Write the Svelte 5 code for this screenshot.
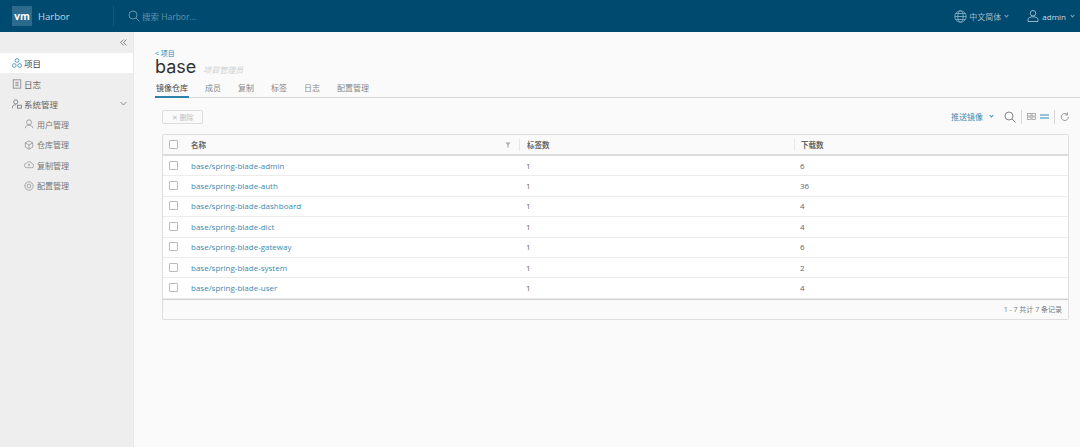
<script lang="ts">
    const tabs = ['镜像仓库', '成员', '复制', '标签', '日志', '配置管理'];

    const repos = [
        { name: 'base/spring-blade-admin', tags: 1, pulls: 6 },
        { name: 'base/spring-blade-auth', tags: 1, pulls: 36 },
        { name: 'base/spring-blade-dashboard', tags: 1, pulls: 4 },
        { name: 'base/spring-blade-dict', tags: 1, pulls: 4 },
        { name: 'base/spring-blade-gateway', tags: 1, pulls: 6 },
        { name: 'base/spring-blade-system', tags: 1, pulls: 2 },
        { name: 'base/spring-blade-user', tags: 1, pulls: 4 }
    ];
</script>

<div class="page">
    <header class="topbar">
        <div class="brand">
            <span class="logo">vm</span>
            <span class="brand-name">Harbor</span>
        </div>
        <div class="search">
            <!-- prettier-ignore -->
            <svg width="12" height="12" viewBox="0 0 24 24" fill="none" stroke="#5f93ae" stroke-width="2"><circle cx="10" cy="10" r="8"></circle><line x1="16" y1="16" x2="23" y2="23"></line></svg>
            <span>搜索 Harbor...</span>
        </div>
        <div class="top-right">
            <div class="top-item">
                <!-- prettier-ignore -->
                <svg width="13" height="13" viewBox="0 0 24 24" fill="none" stroke="#8fb3c7" stroke-width="1.5"><circle cx="12" cy="12" r="10.5"></circle><ellipse cx="12" cy="12" rx="5" ry="10.5"></ellipse><line x1="1.5" y1="12" x2="22.5" y2="12"></line><line x1="3" y1="6.5" x2="21" y2="6.5"></line><line x1="3" y1="17.5" x2="21" y2="17.5"></line></svg>
                <span>中文简体</span>
                <i class="caret"></i>
            </div>
            <div class="top-item user">
                <!-- prettier-ignore -->
                <svg width="12" height="14" viewBox="0 0 24 26" fill="none" stroke="#b5cedb" stroke-width="1.6"><circle cx="12" cy="7.5" r="5.5"></circle><path d="M2 24v-4c0-3 4-5.500 10-5.500s10 2.500 10 5.500v4z"></path></svg>
                <span>admin</span>
                <i class="caret"></i>
            </div>
        </div>
    </header>

    <div class="body">
        <nav class="sidebar">
            <div class="collapse">
                <!-- prettier-ignore -->
                <svg width="7" height="7" viewBox="0 0 12 12" fill="none" stroke="#666" stroke-width="1.4"><polyline points="6,1 1,6 6,11"></polyline><polyline points="11,1 6,6 11,11"></polyline></svg>
            </div>
            <a class="nav-item active">
                <!-- prettier-ignore -->
                <svg width="10" height="10" viewBox="0 0 24 24" fill="none" stroke="#3f8fb5" stroke-width="2"><circle cx="12" cy="6" r="4.500"></circle><circle cx="5.500" cy="18" r="4.500"></circle><circle cx="18.500" cy="18" r="4.500"></circle></svg>
                项目
            </a>
            <a class="nav-item">
                <!-- prettier-ignore -->
                <svg width="10" height="10" viewBox="0 0 24 24" fill="none" stroke="#888" stroke-width="2"><rect x="3" y="2" width="18" height="20"></rect><line x1="8" y1="8" x2="16" y2="8"></line><line x1="8" y1="12" x2="16" y2="12"></line><line x1="8" y1="16" x2="16" y2="16"></line></svg>
                日志
            </a>
            <a class="nav-item">
                <!-- prettier-ignore -->
                <svg width="10" height="10" viewBox="0 0 24 24" fill="none" stroke="#777" stroke-width="2"><circle cx="9" cy="7" r="5"></circle><path d="M1 22v-3c0-3 3-5 8-5"></path><rect x="13" y="15" width="10" height="7"></rect></svg>
                系统管理
                <!-- prettier-ignore -->
                <svg class="chevron" width="7" height="7" viewBox="0 0 12 12" fill="none" stroke="#777" stroke-width="1.400"><polyline points="1,3.500 6,8.500 11,3.500"></polyline></svg>
            </a>
            <a class="nav-item sub">
                <!-- prettier-ignore -->
                <svg width="10" height="10" viewBox="0 0 24 24" fill="none" stroke="#999" stroke-width="2"><circle cx="12" cy="8" r="6"></circle><path d="M3 22c1-5 4-7 9-7s8 2 9 7"></path></svg>
                用户管理
            </a>
            <a class="nav-item sub">
                <!-- prettier-ignore -->
                <svg width="10" height="10" viewBox="0 0 24 24" fill="none" stroke="#999" stroke-width="2"><path d="M12 2l9 5v10l-9 5-9-5V7z"></path><path d="M3 7l9 5 9-5M12 12v10"></path></svg>
                仓库管理
            </a>
            <a class="nav-item sub">
                <!-- prettier-ignore -->
                <svg width="10" height="10" viewBox="0 0 26 24" fill="none" stroke="#999" stroke-width="2"><path d="M7 19h13a5 5 0 0 0 1-10 8 8 0 0 0-15-1 5.500 5.500 0 0 0 1 11z"></path><path d="M13 16v-6M10 12l3-3 3 3"></path></svg>
                复制管理
            </a>
            <a class="nav-item sub">
                <!-- prettier-ignore -->
                <svg width="10" height="10" viewBox="0 0 24 24" fill="none" stroke="#999" stroke-width="2"><circle cx="12" cy="12" r="10"></circle><circle cx="12" cy="12" r="4.500"></circle></svg>
                配置管理
            </a>
        </nav>

        <main class="content">
            <a class="back">&lt; 项目</a>
            <div class="title-row">
                <h1>base</h1>
                <span class="role">项目管理员</span>
            </div>
            <div class="tabs">
                {#each tabs as tab, i}
                    <span class="tab" class:current={i === 0}>{tab}</span>
                {/each}
            </div>

            <div class="inner">
                <div class="toolbar">
                    <button class="delete"><span class="x">✕</span> 删除</button>
                    <div class="actions">
                        <span class="push">推送镜像</span>
                        <i class="caret blue"></i>
                        <!-- prettier-ignore -->
                        <svg class="mag" width="12" height="12" viewBox="0 0 24 24" fill="none" stroke="#777" stroke-width="1.800"><circle cx="10" cy="10" r="8"></circle><line x1="16" y1="16" x2="23" y2="23"></line></svg>
                        <span class="sep"></span>
                        <!-- prettier-ignore -->
                        <svg width="9" height="7" viewBox="0 0 18 14" fill="none" stroke="#999" stroke-width="1.500"><rect x="1" y="1" width="7" height="5"></rect><rect x="10" y="1" width="7" height="5"></rect><rect x="1" y="8" width="7" height="5"></rect><rect x="10" y="8" width="7" height="5"></rect></svg>
                        <!-- prettier-ignore -->
                        <svg width="9" height="7" viewBox="0 0 18 14" fill="none" stroke="#5a9dbf" stroke-width="2.500"><line x1="0" y1="4" x2="18" y2="4"></line><line x1="0" y1="10" x2="18" y2="10"></line></svg>
                        <span class="sep"></span>
                        <!-- prettier-ignore -->
                        <svg width="10" height="10" viewBox="0 0 24 24" fill="none" stroke="#888" stroke-width="2"><path d="M20 12a8.500 8.500 0 1 1-3-6.500"></path><polyline points="18,1 18,7 12,7"></polyline></svg>
                    </div>
                </div>

                <div class="grid">
                    <div class="row head">
                        <span class="cell check"><i class="box"></i></span>
                        <span class="cell name">
                            名称
                            <!-- prettier-ignore -->
                            <svg width="6" height="6" viewBox="0 0 10 10"><polygon points="1,1 9,1 6,5 6,9 4,9 4,5" fill="#aaa"></polygon></svg>
                        </span>
                        <span class="cell">标签数</span>
                        <span class="cell">下载数</span>
                    </div>
                    {#each repos as repo}
                        <div class="row item">
                            <span class="cell check"><i class="box"></i></span>
                            <a class="cell name link">{repo.name}</a>
                            <span class="cell">{repo.tags}</span>
                            <span class="cell">{repo.pulls}</span>
                        </div>
                    {/each}
                    <div class="foot">1 - 7 共计 7 条记录</div>
                </div>
            </div>
        </main>
    </div>
</div>

<style>
    :global(body) {
        background: #fafafa;
    }

    .page {
        display: flex;
        flex-direction: column;
        width: 1080px;
        height: 447px;
        overflow: hidden;
        font-family: 'Open Sans', 'Noto Sans CJK SC', sans-serif;
        font-size: 8px;
        color: #666;
    }

    .topbar {
        display: flex;
        align-items: center;
        flex: 0 0 32px;
        background: #004a70;
        color: #fff;
    }

    .brand {
        display: flex;
        align-items: center;
        gap: 6px;
        width: 114px;
        height: 20px;
        padding-left: 12px;
        border-right: 1px solid #0e5a80;
        box-sizing: border-box;
    }

    .logo {
        display: flex;
        align-items: center;
        justify-content: center;
        width: 20px;
        height: 20px;
        background: #2c6b8d;
        font-size: 10px;
        font-weight: 700;
    }

    .brand-name {
        font-size: 9.5px;
        color: #c5d9e4;
    }

    .search {
        display: flex;
        align-items: center;
        gap: 2px;
        margin-left: 14px;
        font-size: 8.500px;
        color: #5f93ae;
    }

    .top-right {
        display: flex;
        align-items: center;
        margin-left: auto;
        color: #9fbdcd;
    }

    .top-item {
        display: flex;
        align-items: center;
        gap: 2px;
    }

    .top-item.user {
        margin-left: 19px;
        margin-right: 6px;
        gap: 3px;
        color: #c5d9e4;
    }

    .caret {
        display: inline-block;
        width: 2px;
        height: 2px;
        margin: 0 0 2px 2px;
        border-right: 1px solid #86aabd;
        border-bottom: 1px solid #86aabd;
        transform: rotate(45deg);
    }

    .caret.blue {
        margin: 0 0 2px 3px;
        border-color: #3f8fb5;
    }

    .body {
        display: flex;
        flex: 1;
        min-height: 0;
    }

    .sidebar {
        display: flex;
        flex-direction: column;
        flex: 0 0 134px;
        background: #eeeeee;
        border-right: 1px solid #e8e8e8;
        box-sizing: border-box;
    }

    .collapse {
        display: flex;
        justify-content: flex-end;
        align-items: center;
        height: 21px;
        padding-right: 6px;
    }

    .nav-item {
        display: flex;
        align-items: center;
        gap: 2px;
        height: 20.400px;
        padding-left: 12px;
        font-size: 8.500px;
        color: #666;
    }

    .nav-item.active {
        background: #fff;
        color: #444;
    }

    .nav-item.sub {
        padding-left: 24px;
        gap: 3px;
        font-size: 8px;
        color: #777;
    }

    .chevron {
        margin-left: auto;
        margin-right: 6px;
    }

    .content {
        flex: 1;
        padding: 17px 0 0 21px;
        min-width: 0;
    }

    .back {
        display: block;
        height: 8px;
        font-size: 7px;
        line-height: 10px;
        color: #2a87b3;
    }

    .title-row {
        display: flex;
        align-items: baseline;
        gap: 7px;
        height: 20px;
    }

    h1 {
        margin: 0;
        font-family: 'Inter', sans-serif;
        font-size: 18px;
        font-weight: 400;
        line-height: 20px;
        color: #333;
    }

    .role {
        font-size: 8px;
        font-style: italic;
        color: #d0d0d0;
    }

    .tabs {
        display: flex;
        gap: 15px;
        height: 21px;
        border-bottom: 1px solid #d8d8d8;
        box-sizing: border-box;
    }

    .tab {
        padding: 5px 1px 0;
        height: 21px;
        box-sizing: border-box;
        font-size: 8px;
        line-height: 12px;
        color: #888;
    }

    .tab.current {
        color: #444;
        border-bottom: 2px solid #2d82ab;
    }

    .inner {
        padding: 0 12px 0 7px;
    }

    .toolbar {
        display: flex;
        justify-content: space-between;
        align-items: center;
        height: 36px;
    }

    .delete {
        width: 41px;
        height: 14px;
        margin-top: 2px;
        padding: 0;
        background: none;
        border: 1px solid #dcdcdc;
        border-radius: 2px;
        font-family: inherit;
        font-size: 7px;
        color: #c0c0c0;
    }

    .x {
        font-size: 7px;
    }

    .actions {
        display: flex;
        align-items: center;
        gap: 4px;
        margin-right: -2px;
        margin-top: 1px;
    }

    .push {
        font-size: 8px;
        color: #3a8ab0;
    }

    .mag {
        margin-left: 7px;
    }

    .sep {
        width: 1px;
        height: 14px;
        margin: 0 1px;
        background: #d8d8d8;
    }

    .grid {
        width: 907px;
        border: 1px solid #dedede;
        border-radius: 2px;
        box-sizing: border-box;
        background: #fff;
    }

    .row {
        display: grid;
        grid-template-columns: 28px 328px 275px 1fr;
        align-items: center;
        height: 20.400px;
        border-bottom: 1px solid #ececec;
        box-sizing: border-box;
    }

    .row.item {
        padding-bottom: 1px;
    }

    .row.head {
        height: 21px;
        background: #fafafa;
        border-bottom: 2px solid #dcdcdc;
        font-weight: 600;
        font-size: 7.500px;
        color: #666;
    }

    .row.head .cell {
        border-left: 1px solid #e6e6e6;
        height: 12px;
        line-height: 12px;
    }

    .row.head .cell.check {
        border-left: none;
    }

    .cell {
        display: flex;
        align-items: center;
        padding-left: 6px;
    }

    .cell:nth-child(3) {
        padding-left: 7px;
    }

    .cell.check {
        justify-content: flex-start;
        padding-left: 6px;
    }

    .cell.name {
        justify-content: space-between;
        padding-left: 0;
        padding-right: 8px;
    }

    .row.head .cell.name {
        border-left: none;
    }

    .link {
        color: #3a8ab0;
    }

    .box {
        display: block;
        width: 9px;
        height: 9px;
        box-sizing: border-box;
        background: #fff;
        border: 1px solid #bbb;
        border-radius: 1px;
    }

    .foot {
        height: 20px;
        padding-right: 6px;
        background: #fafafa;
        border-top: 1px solid #d0d0d0;
        box-sizing: border-box;
        font-size: 7px;
        line-height: 20px;
        text-align: right;
        color: #777;
    }
</style>
